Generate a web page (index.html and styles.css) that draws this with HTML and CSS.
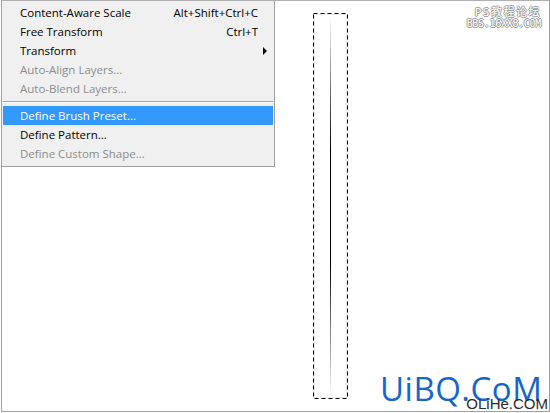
FILE: index.html
```html
<!DOCTYPE html>
<html lang="en">
<head>
    <meta charset='utf-8'>
    <title>Define Brush Preset</title>
    <link rel="stylesheet" href="styles.css">
</head>
<body>

<div class="frame">
    <ul class="menu">
        <li class="item"><span>Content-Aware Scale</span><span class="key">Alt+Shift+Ctrl+C</span></li>
        <li class="item"><span>Free Transform</span><span class="key">Ctrl+T</span></li>
        <li class="item sub"><span>Transform</span><span class="arrow"></span></li>
        <li class="item off"><span>Auto-Align Layers...</span></li>
        <li class="item off"><span>Auto-Blend Layers...</span></li>
        <li class="sep"></li>
        <li class="item active"><span>Define Brush Preset...</span></li>
        <li class="item"><span>Define Pattern...</span></li>
        <li class="item off"><span>Define Custom Shape...</span></li>
    </ul>

    <svg class="selection" width="36" height="387" viewBox="0 0 36 387">
        <defs>
            <linearGradient id="stroke" x1="0" y1="0" x2="0" y2="1">
                <stop offset="0" stop-color="#000" stop-opacity="0"/>
                <stop offset="0.35" stop-color="#000" stop-opacity="1"/>
                <stop offset="0.65" stop-color="#000" stop-opacity="1"/>
                <stop offset="1" stop-color="#000" stop-opacity="0"/>
            </linearGradient>
        </defs>
        <rect x="1.5" y="1.5" width="32" height="383" fill="none" stroke="#d8d8d8" stroke-dasharray="1 1"/>
        <rect x="0.5" y="0.5" width="34" height="385" fill="none" stroke="#000" stroke-dasharray="4 3"/>
        <rect x="17" y="3" width="1" height="381" fill="url(#stroke)"/>
    </svg>

    <div class="stamp">
        <span class="cn">PS教程论坛</span>
        <span>BBS.16XX8.COM</span>
    </div>

    <div class="brand">UiBQ.CoM</div>
    <div class="brand-sub">OLiHe.COM</div>
</div>

</body>
</html>
```

FILE: styles.css
```css
body {
    margin: 0;
    background: #ffffff;
}

.frame {
    position: relative;
    box-sizing: border-box;
    width: 549px;
    height: 412px;
    margin-left: 1px;
    border: 1px solid #a0a0a0;
    border-top-color: #b0b0b0;
    background: #ffffff;
    overflow: hidden;
}

.menu {
    list-style: none;
    margin: -1px 0 0 0;
    padding: 3px 1px 3px 1px;
    width: 270px;
    background: #f0f0f0;
    border-right: 1px solid #a0a0a0;
    border-bottom: 1px solid #a0a0a0;
    font-family: "Open Sans", sans-serif;
    font-size: 11.5px;
    color: #000000;
}

.menu .item {
    display: flex;
    justify-content: space-between;
    align-items: center;
    height: 19px;
    padding: 0 15px 0 17px;
}

.menu .off {
    color: #8d8d8d;
}

.menu .active {
    background: #3399ff;
    color: #ffffff;
}

.menu .sep {
    height: 1px;
    margin: 3px 0 3px 0;
    background: #a0a0a0;
    border-bottom: 1px solid #ffffff;
}

.menu .arrow {
    width: 0;
    height: 0;
    margin-right: -9px;
    border-top: 4px solid transparent;
    border-bottom: 4px solid transparent;
    border-left: 4px solid #000000;
}

.selection {
    position: absolute;
    left: 311px;
    top: 12px;
}

.stamp {
    position: absolute;
    right: 8px;
    top: 6px;
    display: flex;
    flex-direction: column;
    align-items: flex-end;
    font-family: "DejaVu Sans Mono", "Noto Sans CJK SC", monospace;
    font-size: 10px;
    line-height: 11px;
    letter-spacing: -0.3px;
    color: #ffffff;
    text-shadow: 1px 0 0 #9a9a9a, -1px 0 0 #9a9a9a, 0 1px 0 #9a9a9a, 0 -1px 0 #9a9a9a;
}

.stamp .cn {
    font-size: 11px;
    letter-spacing: 1.5px;
}

.brand {
    position: absolute;
    left: 378px;
    top: 368px;
    font-family: "Open Sans", sans-serif;
    font-size: 33px;
    line-height: 40px;
    letter-spacing: 0.5px;
    color: #1666c9;
}

.brand-sub {
    position: absolute;
    right: 1px;
    top: 395px;
    font-family: "Liberation Sans", Arial, sans-serif;
    font-size: 15px;
    line-height: 16px;
    color: #2a2a2a;
}
```
